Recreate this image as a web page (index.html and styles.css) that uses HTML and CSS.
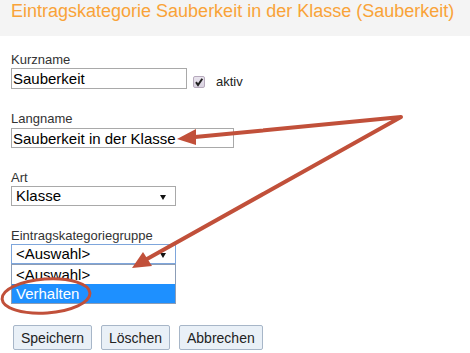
FILE: index.html
```html
<!DOCTYPE html>
<html lang="de">

<head>
    <meta charset="UTF-8">
    <meta name="viewport" content="width=device-width, initial-scale=1.0">
    <title>Eintragskategorie</title>
    <link rel="stylesheet" href="styles.css">
</head>

<body>

    <!-- Kopfzeile -->
    <div class="kopf">
        <h1>Eintragskategorie Sauberkeit in der Klasse (Sauberkeit)</h1>
    </div>

    <!-- Formular -->
    <form class="formular">
        <div class="feld feld-erstes">
            <label for="kurzname">Kurzname</label>
            <div class="zeile">
                <input type="text" id="kurzname" class="eingabe eingabe-kurz" value="Sauberkeit">
                <span class="haken">
                    <svg width="10" height="10" viewBox="0 0 10 10">
                        <path d="M2 5.2 L4 8 L8.3 1.8" fill="none" stroke="#222" stroke-width="2" />
                    </svg>
                </span>
                <span class="aktiv">aktiv</span>
            </div>
        </div>

        <div class="feld">
            <label for="langname">Langname</label>
            <input type="text" id="langname" class="eingabe eingabe-lang" value="Sauberkeit in der Klasse">
        </div>

        <div class="feld">
            <label>Art</label>
            <div class="auswahl">
                <span>Klasse</span>
                <span class="pfeil"></span>
            </div>
        </div>

        <div class="feld">
            <label>Eintragskategoriegruppe</label>
            <div class="auswahl auswahl-offen">
                <span>&lt;Auswahl&gt;</span>
                <span class="pfeil"></span>
                <div class="liste">
                    <div class="option">&lt;Auswahl&gt;</div>
                    <div class="option gewaehlt">Verhalten</div>
                </div>
            </div>
        </div>

        <div class="knoepfe">
            <button type="button">Speichern</button>
            <button type="button">Löschen</button>
            <button type="button">Abbrechen</button>
        </div>
    </form>

    <!-- Markierungen (Pfeile und Kreis) -->
    <svg class="markierung" width="470" height="353" viewBox="0 0 470 353">
        <g stroke="#c1503a" stroke-width="4" stroke-linecap="round" fill="none">
            <path d="M195 137 L401 117 L147 259" stroke-linejoin="round" />
            <ellipse cx="46" cy="296" rx="44" ry="17" stroke-width="3" transform="rotate(-4 46 296)" />
        </g>
        <g fill="#c1503a">
            <polygon points="177,139 196,129 196,145" />
            <polygon points="132,268 143,252 152,266" />
        </g>
    </svg>

</body>

</html>
```

FILE: styles.css
```css
body {
    margin: 0;
    font-family: "Liberation Sans", Arial, sans-serif;
    color: #333;
    background: #fff;
    position: relative;
    width: 470px;
    height: 353px;
    overflow: hidden;
}

.kopf {
    background: #f4f4f4;
    height: 36px;
    padding-left: 11px;
}

.kopf h1 {
    margin: 0;
    font-size: 18px;
    font-weight: normal;
    line-height: 22px;
    color: #f9a338;
}

.formular {
    padding: 0 11px;
}

.feld {
    margin-top: 22px;
}

.feld-erstes {
    margin-top: 16px;
}

.feld label {
    display: block;
    font-size: 13px;
    line-height: 15px;
    margin-bottom: 1px;
}

.zeile {
    display: flex;
    align-items: flex-start;
}

.eingabe {
    box-sizing: border-box;
    font-family: "Liberation Sans", Arial, sans-serif;
    font-size: 15px;
    color: #000;
    border: 1px solid #a9a9a9;
    padding: 0 1px;
    margin: 0;
    outline: none;
}

.eingabe-kurz {
    width: 176px;
    height: 21px;
}

.eingabe-lang {
    width: 223px;
    height: 20px;
    margin-top: 1px;
}

.haken {
    box-sizing: border-box;
    width: 12px;
    height: 12px;
    margin: 8px 0 0 6px;
    border: 1px solid #b6a9bc;
    border-radius: 2px;
    background: linear-gradient(#e9e4ee, #d9d2e0);
    display: flex;
    align-items: center;
    justify-content: center;
}

.aktiv {
    font-size: 13px;
    line-height: 15px;
    margin: 6px 0 0 11px;
    color: #222;
}

.auswahl {
    box-sizing: border-box;
    position: relative;
    width: 165px;
    height: 20px;
    border: 1px solid #a9a9a9;
    font-size: 15px;
    line-height: 18px;
    color: #000;
    padding-left: 4px;
    display: flex;
    justify-content: space-between;
    align-items: flex-start;
}

.auswahl-offen {
    border-color: #7ea6dc;
}

.pfeil {
    width: 0;
    height: 0;
    border-left: 3px solid transparent;
    border-right: 3px solid transparent;
    border-top: 5px solid #111;
    margin: 8px 9px 0 0;
}

.liste {
    position: absolute;
    top: 19px;
    left: -1px;
    width: 165px;
    box-sizing: border-box;
    border: 1px solid #8c9db6;
    background: #fff;
}

.option {
    height: 19px;
    line-height: 19px;
    padding-left: 4px;
}

.option.gewaehlt {
    background: #1e90ff;
    color: #fff;
}

.knoepfe {
    display: flex;
    gap: 9px;
    margin-top: 61px;
    padding-left: 2px;
}

.knoepfe button {
    font-family: "Liberation Sans", Arial, sans-serif;
    font-size: 14px;
    color: #222;
    height: 25px;
    padding: 0 7px;
    border: 1px solid #a7b6c8;
    border-radius: 2px;
    background: #e9f0f7;
}

.markierung {
    position: absolute;
    top: 0;
    left: 0;
    pointer-events: none;
}
```
